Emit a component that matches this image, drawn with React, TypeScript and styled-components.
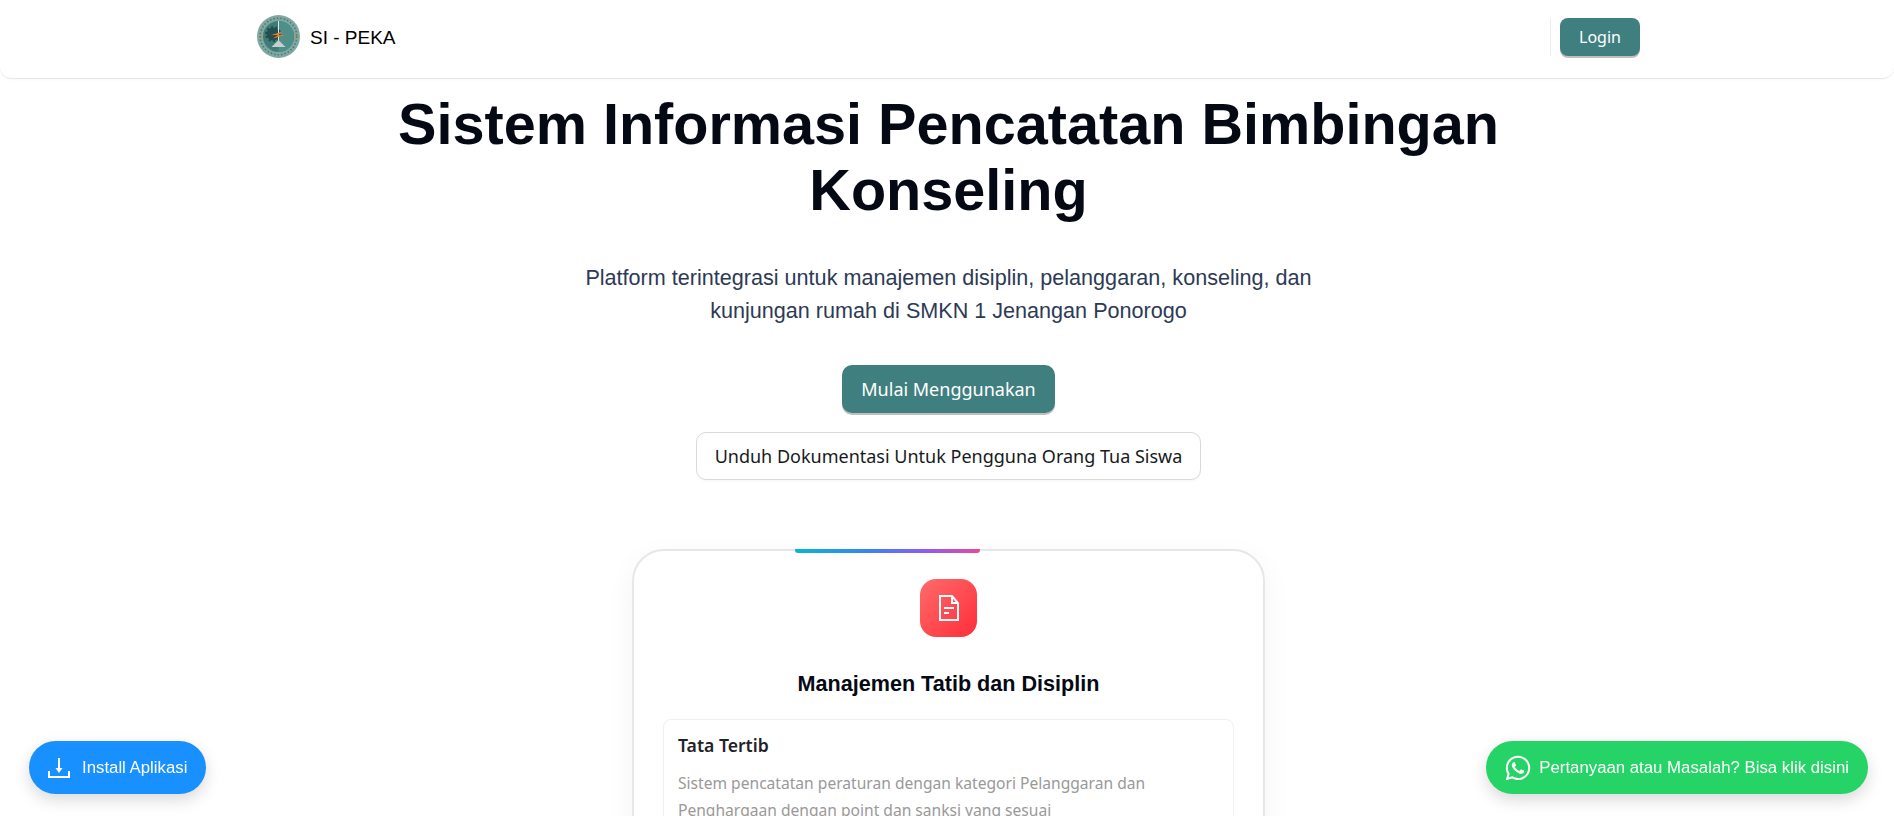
import React from "react";
import styled, { createGlobalStyle } from "styled-components";
import { FaWhatsapp } from "react-icons/fa";

const Global = createGlobalStyle`
  html, body { margin: 0; padding: 0; height: 816px; overflow: hidden; background: #fff; }
  body { font-family: "Liberation Sans", Arial, sans-serif; color: #000; }
  * { box-sizing: border-box; }
`;

const Page = styled.div`
  height: 816px;
  overflow: hidden;
`;

const Nav = styled.header`
  height: 79px;
  background: #fff;
  border-bottom: 1px solid #e8e8e8;
  border-radius: 0 0 12px 12px;
  box-shadow: 0 1px 2px rgba(0, 0, 0, 0.03);
  padding: 18px 254px 0 257px;
  display: flex;
  justify-content: space-between;
  align-items: flex-start;
`;

const Brand = styled.div`
  display: flex;
  align-items: center;
  gap: 10px;
  font-size: 19px;
  height: 37px;
  color: #000;
`;

const BrandName = styled.span`
  padding-top: 2px;
`;

const BrandMark = styled.svg`
  filter: blur(0.4px);
`;

const NavActions = styled.div`
  display: flex;
  align-items: stretch;
  gap: 9px;
  height: 38px;
`;

const Divider = styled.span`
  width: 1px;
  background: #ececec;
`;

const TealButton = styled.button<{ $large?: boolean }>`
  width: ${(p) => (p.$large ? "213px" : "80px")};
  height: ${(p) => (p.$large ? "48px" : "38px")};
  background: #407f7f;
  color: #fff;
  border: 0;
  border-radius: ${(p) => (p.$large ? "10px" : "8px")};
  box-shadow: 0 2px 0 rgba(0, 0, 0, 0.25);
  font-family: "Noto Sans", sans-serif;
  font-size: ${(p) => (p.$large ? "18px" : "16px")};
  padding: 0;
`;

const OutlineButton = styled.button`
  width: 505px;
  height: 48px;
  background: #fff;
  color: #171a20;
  border: 1px solid #d9d9d9;
  border-radius: 10px;
  box-shadow: 0 2px 0 rgba(0, 0, 0, 0.02);
  font-family: "Noto Sans", sans-serif;
  font-size: 18px;
  padding: 0;
`;

const Hero = styled.main`
  display: flex;
  flex-direction: column;
  align-items: center;
  padding-left: 3px;
`;

const Title = styled.h1`
  width: 1200px;
  margin: 12px 0 0;
  text-align: center;
  font-size: 57.6px;
  line-height: 66px;
  font-weight: 700;
  color: #050914;
`;

const Subtitle = styled.p`
  width: 800px;
  margin: 38px 0 0;
  text-align: center;
  font-size: 21.6px;
  line-height: 33px;
  color: #2d3a55;
`;

const Actions = styled.div`
  display: flex;
  flex-direction: column;
  align-items: center;
  gap: 19px;
  margin-top: 38px;
`;

const Card = styled.section`
  position: relative;
  width: 633px;
  margin-top: 69px;
  padding: 28px 29px 30px;
  border: 2px solid #e5e7eb;
  border-radius: 32px;
  background: #fff;
  box-shadow: 0 10px 30px rgba(0, 0, 0, 0.05);
  display: flex;
  flex-direction: column;
  align-items: center;
`;

const TopBar = styled.span`
  position: absolute;
  top: -2px;
  left: 161px;
  width: 185px;
  height: 4px;
  border-radius: 0 0 3px 3px;
  background: linear-gradient(90deg, #06b6d4, #3b82f6 40%, #8b5cf6 70%, #ec4899);
`;

const IconTile = styled.div`
  width: 57px;
  height: 58px;
  border-radius: 16px;
  background: linear-gradient(135deg, #ff6b6b, #ff2d3a);
  display: flex;
  align-items: center;
  justify-content: center;
`;

const CardTitle = styled.h3`
  margin: 33px 0 0;
  font-size: 21.6px;
  line-height: 28px;
  font-weight: 700;
  color: #050914;
  text-align: center;
`;

const Feature = styled.article`
  width: 100%;
  margin-top: 21px;
  padding: 12px 14px;
  border: 1px solid #f0f0f0;
  border-radius: 8px;
`;

const FeatureTitle = styled.h4`
  margin: 0;
  font-family: "Noto Sans", sans-serif;
  font-size: 17.600px;
  line-height: 26px;
  font-weight: 600;
  color: #1f2328;
`;

const FeatureText = styled.p`
  margin: 12px 0 0;
  font-family: "Noto Sans", sans-serif;
  font-size: 15.600px;
  line-height: 27px;
  color: #999;
`;

const Floating = styled.a<{ $side: "left" | "right"; $bg: string; $gap: number; $lead: number }>`
  position: fixed;
  bottom: 22px;
  ${(p) => (p.$side === "left" ? "left: 29px;" : "right: 26px;")}
  height: 53px;
  padding: 0 19px 0 ${(p) => p.$lead}px;
  display: flex;
  align-items: center;
  gap: ${(p) => p.$gap}px;
  border-radius: 27px;
  background: ${(p) => p.$bg};
  color: #fff;
  font-size: 16.800px;
  white-space: nowrap;
  box-shadow: 0 6px 16px rgba(0, 0, 0, 0.15);
`;

const Logo = () => (
  <BrandMark width="43" height="43" viewBox="0 0 43 43" aria-hidden="true">
    <circle cx="21.5" cy="21.5" r="21.5" fill="#7fa8a2" />
    <circle cx="21.5" cy="21.5" r="15.5" fill="#3f7c78" />
    <path d="M21.5 6a15.500 15.500 0 0 1 0 31z" fill="#4f8f89" />
    <circle cx="16" cy="19" r="6.500" fill="#234f50" strokeDasharray="2 2" stroke="#234f50" strokeWidth="3" />
    <path d="M21.5 6v20" stroke="#dfe6e2" strokeWidth="1" />
    <path d="M14 20l12-3.500-5 3.500 7 0-12 3.500 5-3.500z" fill="#ee7c24" />
    <path d="M21.500 25l7 7h-14z" fill="#c6cfca" />
    <circle cx="4.500" cy="21.500" r="1.300" fill="#d08a40" />
    <circle cx="38.500" cy="21.500" r="1.300" fill="#d08a40" />
    <circle cx="21.500" cy="21.500" r="18.300" fill="none" stroke="#2f5a5a" strokeWidth="1.600" strokeDasharray="1.500 2" opacity="0.6" />
  </BrandMark>
);

const DocIcon = () => (
  <svg width="24" height="28" viewBox="0 0 24 28" fill="none" stroke="#fff" strokeWidth="2" aria-hidden="true">
    <path d="M3 2h12l6 7v17H3z" />
    <path d="M15 2v7h6" />
    <path d="M7 14h10M7 19h5" />
  </svg>
);

const DownloadIcon = () => (
  <svg width="22" height="22" viewBox="0 0 22 22" fill="none" stroke="#fff" strokeWidth="2" aria-hidden="true">
    <path d="M11 1v13" />
    <path d="M11 16l-3.500-5h7z" fill="#fff" stroke="none" />
    <path d="M1 14v6h20v-6" />
  </svg>
);

export default function App() {
  return (
    <Page>
      <Global />
      <Nav>
        <Brand>
          <Logo />
          <BrandName>SI - PEKA</BrandName>
        </Brand>
        <NavActions>
          <Divider />
          <TealButton>Login</TealButton>
        </NavActions>
      </Nav>
      <Hero>
        <Title>Sistem Informasi Pencatatan Bimbingan Konseling</Title>
        <Subtitle>
          Platform terintegrasi untuk manajemen disiplin, pelanggaran, konseling, dan
          <br />
          kunjungan rumah di SMKN 1 Jenangan Ponorogo
        </Subtitle>
        <Actions>
          <TealButton $large>Mulai Menggunakan</TealButton>
          <OutlineButton>Unduh Dokumentasi Untuk Pengguna Orang Tua Siswa</OutlineButton>
        </Actions>
        <Card>
          <TopBar />
          <IconTile>
            <DocIcon />
          </IconTile>
          <CardTitle>Manajemen Tatib dan Disiplin</CardTitle>
          <Feature>
            <FeatureTitle>Tata Tertib</FeatureTitle>
            <FeatureText>
              Sistem pencatatan peraturan dengan kategori Pelanggaran dan Penghargaan dengan point dan sanksi yang sesuai
            </FeatureText>
          </Feature>
        </Card>
      </Hero>
      <Floating $side="left" $bg="#1890ff" $gap={12} $lead={19}>
        <DownloadIcon />
        Install Aplikasi
      </Floating>
      <Floating $side="right" $bg="#25d366" $gap={7} $lead={18}>
        <FaWhatsapp size={28} />
        Pertanyaan atau Masalah? Bisa klik disini
      </Floating>
    </Page>
  );
}
